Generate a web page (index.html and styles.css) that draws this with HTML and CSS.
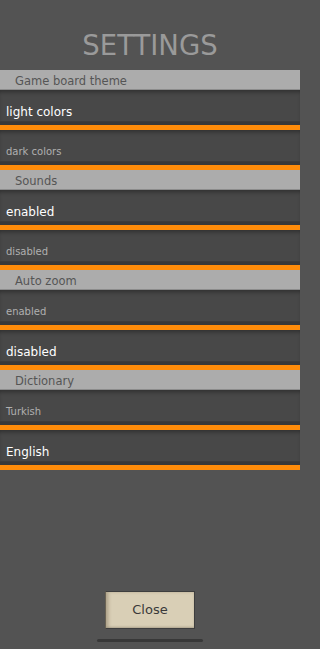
FILE: index.html
```html
<!DOCTYPE html>
<html>
<head>
<meta charset="utf-8">
<link rel="stylesheet" href="styles.css">
</head>
<body>
<div class="screen">
  <div class="title">SETTINGS</div>
  <div class="list">
    <div class="section-head">Game board theme</div>
    <div class="row selected"><div class="row-body">light colors</div></div>
    <div class="row"><div class="row-body">dark colors</div></div>

    <div class="section-head">Sounds</div>
    <div class="row selected"><div class="row-body">enabled</div></div>
    <div class="row"><div class="row-body">disabled</div></div>

    <div class="section-head">Auto zoom</div>
    <div class="row"><div class="row-body">enabled</div></div>
    <div class="row selected"><div class="row-body">disabled</div></div>

    <div class="section-head">Dictionary</div>
    <div class="row"><div class="row-body">Turkish</div></div>
    <div class="row selected"><div class="row-body">English</div></div>
  </div>
  <div class="footer">
    <div class="close-btn">Close</div>
    <div class="home-bar"></div>
  </div>
</div>
</body>
</html>
```

FILE: styles.css
```css
html, body {
  margin: 0;
  padding: 0;
  background: #535353;
}

.screen {
  width: 300px;
  height: 649px;
  display: flex;
  flex-direction: column;
  background: #535353;
  font-family: "DejaVu Sans", "Liberation Sans", sans-serif;
  overflow: hidden;
}

.title {
  height: 70px;
  box-sizing: border-box;
  padding-top: 31px;
  font-size: 27.5px;
  line-height: 28px;
  color: #9a9a9a;
  text-align: center;
}

.list {
  display: flex;
  flex-direction: column;
}

.section-head {
  height: 20px;
  box-sizing: border-box;
  padding-left: 15px;
  padding-top: 4px;
  background: #acacac;
  border-bottom: 1px solid #8c8c8c;
  color: #555555;
  font-size: 11.5px;
  line-height: 14px;
}

.row {
  height: 40px;
  box-sizing: border-box;
  background: #383838;
  display: flex;
  flex-direction: column;
}

.row-body {
  height: 32px;
  box-sizing: border-box;
  background: #484848;
  box-shadow: inset 0 4px 4px -2px rgba(0, 0, 0, 0.35);
  border-bottom: 1px solid #3c3c3c;
  padding-left: 6px;
  padding-top: 17px;
  font-size: 10px;
  line-height: 10px;
  color: #b0b0b0;
}

.row::after {
  content: "";
  display: block;
  height: 5px;
  margin-top: 3px;
  background: #ff8c0a;
}

.row.selected .row-body {
  padding-top: 16px;
  font-size: 12px;
  line-height: 12px;
  color: #ffffff;
}

.footer {
  margin-top: auto;
  display: flex;
  flex-direction: column;
  align-items: center;
  padding-bottom: 7px;
}

.close-btn {
  width: 90px;
  height: 38px;
  box-sizing: border-box;
  background: #d9cfb6;
  border: 1px solid #3e3e3e;
  border-left-color: #6a6354;
  box-shadow: inset 3px 0 3px rgba(90, 75, 50, 0.25), inset 0 -1px 2px rgba(0, 0, 0, 0.15);
  color: #3a3a3a;
  font-size: 13px;
  line-height: 36px;
  text-align: center;
}

.home-bar {
  margin-top: 10px;
  width: 106px;
  height: 3px;
  border-radius: 2px;
  background: #383838;
}
```
